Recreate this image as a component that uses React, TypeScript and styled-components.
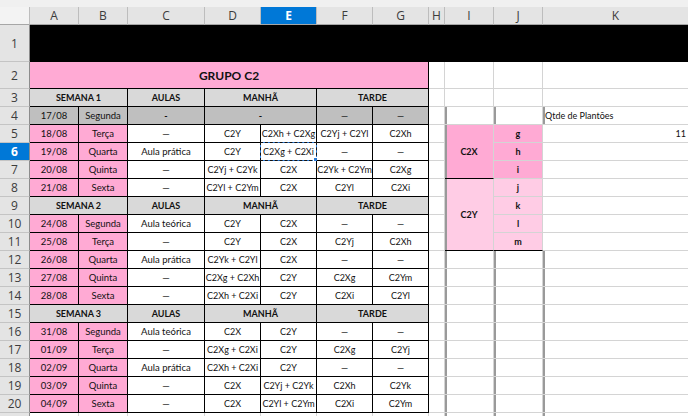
import React from "react";
import styled, { createGlobalStyle } from "styled-components";

const GlobalStyle = createGlobalStyle`
    html, body {
        margin: 0;
        padding: 0;
        background: #ffffff;
        overflow: hidden;
    }
    body {
        font-family: "Lato", "Liberation Sans", sans-serif;
    }
`;

const PINK = "#ffaad4";
const LIGHT_PINK = "#ffcce5";
const HEAD_GRAY = "#d9d9d9";
const DARK_GRAY = "#bfbfbf";
const GRID = "#d4d4d4";
const SELECTED = "#0078d7";

const StyledTopStrip = styled.div`
    height: 7px;
    background: #f0f0f0;
`;
StyledTopStrip.displayName = "StyledTopStrip";

const StyledSheet = styled.div`
    display: grid;
    grid-template-columns: 30px 49px 49px 77px 56px 56px 56px 56px 16px 49px 49px 146px;
    grid-template-rows: 18px 37px 27px repeat(19, 18px);
    width: 689px;
`;
StyledSheet.displayName = "StyledSheet";

const StyledCorner = styled.div`
    background: #f3f3f3;
    border-right: 1px solid #bdbdbd;
    border-bottom: 1px solid #a6a6a6;
`;
StyledCorner.displayName = "StyledCorner";

const StyledColumnHead = styled.div<{ $active?: boolean }>`
    display: flex;
    align-items: center;
    justify-content: center;
    box-sizing: border-box;
    font-family: "Open Sans", "Noto Sans", sans-serif;
    font-size: 12px;
    font-weight: ${p => (p.$active ? 700 : 400)};
    color: ${p => (p.$active ? "#ffffff" : "#3c3c3c")};
    background: ${p => (p.$active ? SELECTED : "#e4e4e4")};
    border-right: 1px solid #bdbdbd;
    border-bottom: 1px solid #a6a6a6;
`;
StyledColumnHead.displayName = "StyledColumnHead";

const StyledRowHead = styled(StyledColumnHead)`
    border-right: 1px solid #8c8c8c;
    border-bottom: 1px solid #c4c4c4;
`;
StyledRowHead.displayName = "StyledRowHead";

interface CellProps {
    $span?: number;
    $rows?: number;
    $fill?: string;
    $line?: string;
    $bottom?: string;
    $bold?: boolean;
    $size?: number;
    $align?: "left" | "center" | "right";
    $edge?: boolean;
}

const StyledCell = styled.div<CellProps>`
    grid-column: span ${p => p.$span ?? 1};
    grid-row: span ${p => p.$rows ?? 1};
    position: relative;
    display: flex;
    align-items: center;
    justify-content: ${p => (p.$align === "left" ? "flex-start" : p.$align === "right" ? "flex-end" : "center")};
    box-sizing: border-box;
    padding: 0 2px;
    overflow: visible;
    white-space: nowrap;
    font-size: ${p => p.$size ?? 9}px;
    font-weight: ${p => (p.$bold ? 700 : 400)};
    color: #111111;
    background: ${p => p.$fill ?? "#ffffff"};
    border-right: 1px solid ${p => p.$line ?? GRID};
    border-bottom: 1px solid ${p => p.$bottom ?? p.$line ?? GRID};
    box-shadow: ${p => (p.$edge ? "inset 2px 0 0 #9a9a9a" : "none")};
`;
StyledCell.displayName = "StyledCell";

// copy marquee around the current cell
const StyledMarquee = styled.div`
    position: absolute;
    left: -1px;
    top: -1px;
    right: -1px;
    bottom: -1px;
    border: 1px solid #2b7bd6;
    pointer-events: none;
    &::before {
        content: "";
        position: absolute;
        inset: -1px;
        border: 1px dashed #111111;
    }
    &::after {
        content: "";
        position: absolute;
        right: -3px;
        bottom: -3px;
        width: 4px;
        height: 4px;
        background: #2b7bd6;
        border: 1px solid #ffffff;
    }
`;
StyledMarquee.displayName = "StyledMarquee";

const COLUMNS = ["A", "B", "C", "D", "E", "F", "G", "H", "I", "J", "K"];
const BLACK = "#000000";

type Day = [string, string, string, string, string, string, string];

interface Week {
    label: string;
    days: Day[];
}

const weeks: Week[] = [
    {
        label: "SEMANA 1",
        days: [
            ["18/08", "Terça", "—", "C2Y", "C2Xh + C2Xg", "C2Yj + C2Yl", "C2Xh"],
            ["19/08", "Quarta", "Aula prática", "C2Y", "C2Xg + C2Xi", "—", "—"],
            ["20/08", "Quinta", "—", "C2Yj + C2Yk", "C2X", "C2Yk + C2Ym", "C2Xg"],
            ["21/08", "Sexta", "—", "C2Yl + C2Ym", "C2X", "C2Yl", "C2Xi"],
        ],
    },
    {
        label: "SEMANA 2",
        days: [
            ["24/08", "Segunda", "Aula teórica", "C2Y", "C2X", "—", "—"],
            ["25/08", "Terça", "—", "C2Y", "C2X", "C2Yj", "C2Xh"],
            ["26/08", "Quarta", "Aula prática", "C2Yk + C2Yl", "C2X", "—", "—"],
            ["27/08", "Quinta", "—", "C2Xg + C2Xh", "C2Y", "C2Xg", "C2Ym"],
            ["28/08", "Sexta", "—", "C2Xh + C2Xi", "C2Y", "C2Xi", "C2Yl"],
        ],
    },
    {
        label: "SEMANA 3",
        days: [
            ["31/08", "Segunda", "Aula teórica", "C2X", "C2Y", "—", "—"],
            ["01/09", "Terça", "—", "C2Xg + C2Xi", "C2Y", "C2Xg", "C2Yj"],
            ["02/09", "Quarta", "Aula prática", "C2Xh + C2Xi", "C2Y", "—", "—"],
            ["03/09", "Quinta", "—", "C2X", "C2Yj + C2Yk", "C2Xh", "C2Yk"],
            ["04/09", "Sexta", "—", "C2X", "C2Yl + C2Ym", "C2Xi", "C2Ym"],
        ],
    },
];

// right-hand block (columns H to K), keyed by sheet row
function sideCells(row: number): JSX.Element[] {
    const cells: JSX.Element[] = [<StyledCell key="h" />];
    const edge = row >= 4;
    if (row === 5) {
        cells.push(<StyledCell key="i" $rows={3} $fill={PINK} $bold $edge $bottom={BLACK}>C2X</StyledCell>);
    } else if (row === 8) {
        cells.push(<StyledCell key="i" $rows={4} $fill={LIGHT_PINK} $bold $edge $bottom={BLACK}>C2Y</StyledCell>);
    } else if (row < 5 || row > 11) {
        cells.push(<StyledCell key="i" $edge={edge} />);
    }
    const letters: { [r: number]: string } = { 5: "g", 6: "h", 7: "i", 8: "j", 9: "k", 10: "l", 11: "m" };
    if (letters[row]) {
        cells.push(
            <StyledCell key="j" $fill={row < 8 ? PINK : LIGHT_PINK} $bold $bottom={row === 11 ? BLACK : undefined}>
                {letters[row]}
            </StyledCell>
        );
    } else {
        cells.push(<StyledCell key="j" $edge={edge} />);
    }
    let k: React.ReactNode = null;
    let align: "left" | "right" | "center" = "center";
    if (row === 4) {
        k = "Qtde de Plantões";
        align = "left";
    } else if (row === 5) {
        k = "11";
        align = "right";
    }
    cells.push(<StyledCell key="k" $align={align} $edge={row === 4 || row > 11}>{k}</StyledCell>);
    return cells;
}

function headerRow(label: string): JSX.Element[] {
    return [
        <StyledCell key="s" $span={2} $fill={HEAD_GRAY} $line={BLACK} $bold>{label}</StyledCell>,
        <StyledCell key="a" $fill={HEAD_GRAY} $line={BLACK} $bold>AULAS</StyledCell>,
        <StyledCell key="m" $span={2} $fill={HEAD_GRAY} $line={BLACK} $bold>MANHÃ</StyledCell>,
        <StyledCell key="t" $span={2} $fill={HEAD_GRAY} $line={BLACK} $bold>TARDE</StyledCell>,
    ];
}

// date, weekday and class columns read a little larger than the shift codes
function dayRow(day: Day, row: number): JSX.Element[] {
    return day.map((text, i) => (
        <StyledCell key={i} $fill={i < 2 ? PINK : undefined} $line={BLACK} $size={i < 3 ? 9.5 : 9}>
            {text}
            {row === 6 && i === 4 && <StyledMarquee />}
        </StyledCell>
    ));
}

export default function App() {
    const rows: { n: number; cells: JSX.Element[] }[] = [];

    rows.push({
        n: 1,
        cells: [<StyledCell key="black" $span={11} $fill={BLACK} $line={BLACK} />],
    });
    rows.push({
        n: 2,
        cells: [
            <StyledCell key="title" $span={7} $fill={PINK} $line={BLACK} $bold $size={12}>GRUPO C2</StyledCell>,
            ...sideCells(2),
        ],
    });

    let n = 3;
    weeks.forEach((week, w) => {
        rows.push({ n, cells: [...headerRow(week.label), ...sideCells(n)] });
        n++;
        if (w === 0) {
            rows.push({
                n,
                cells: [
                    <StyledCell key="d" $fill={DARK_GRAY} $line={BLACK} $size={9.5}>17/08</StyledCell>,
                    <StyledCell key="w" $fill={DARK_GRAY} $line={BLACK} $size={9.5}>Segunda</StyledCell>,
                    <StyledCell key="c" $fill={DARK_GRAY} $line={BLACK} $bold>-</StyledCell>,
                    <StyledCell key="de" $span={2} $fill={DARK_GRAY} $line={BLACK} $bold>-</StyledCell>,
                    <StyledCell key="f" $fill={DARK_GRAY} $line={BLACK}>—</StyledCell>,
                    <StyledCell key="g" $fill={DARK_GRAY} $line={BLACK}>—</StyledCell>,
                    ...sideCells(n),
                ],
            });
            n++;
        }
        week.days.forEach(day => {
            rows.push({ n, cells: [...dayRow(day, n), ...sideCells(n)] });
            n++;
        });
    });

    rows.push({
        n: 21,
        cells: [
            ...COLUMNS.slice(0, 7).map(c => <StyledCell key={c} />),
            ...sideCells(21),
        ],
    });

    return (
        <>
            <GlobalStyle />
            <StyledTopStrip />
            <StyledSheet>
                <StyledCorner />
                {COLUMNS.map(c => (
                    <StyledColumnHead key={c} $active={c === "E"}>{c}</StyledColumnHead>
                ))}
                {rows.map(r => (
                    <React.Fragment key={r.n}>
                        <StyledRowHead $active={r.n === 6}>{r.n}</StyledRowHead>
                        {r.cells}
                    </React.Fragment>
                ))}
            </StyledSheet>
        </>
    );
}
